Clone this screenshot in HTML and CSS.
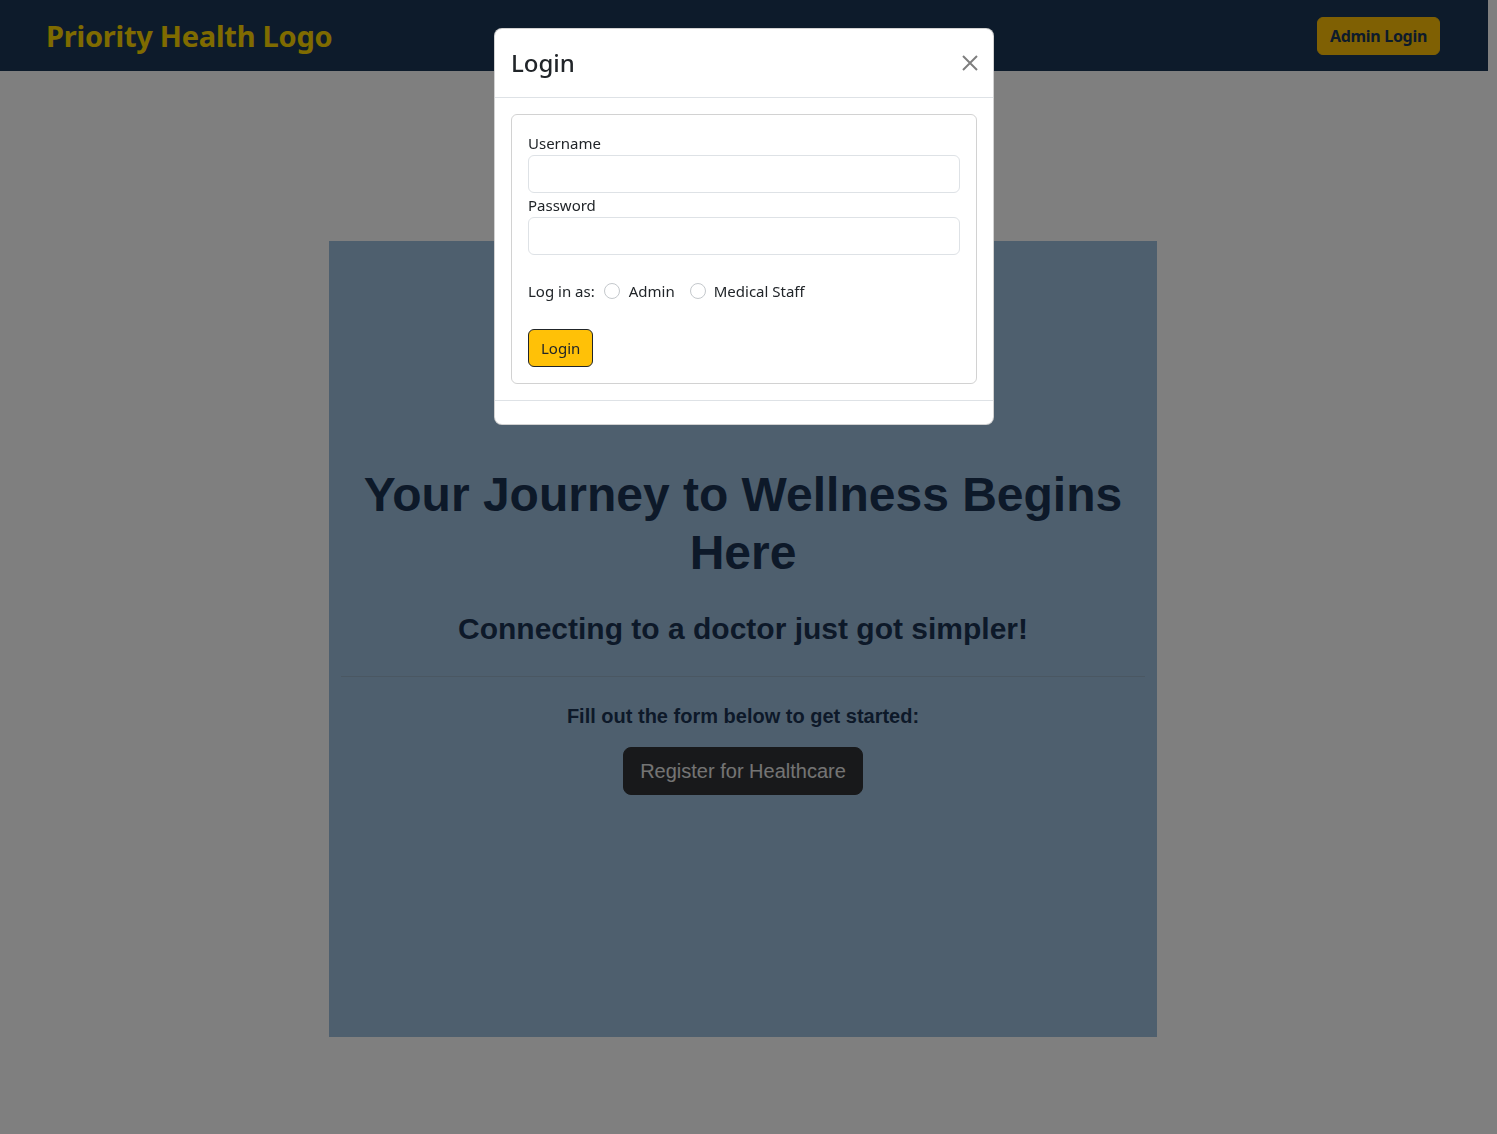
FILE: index.html
```html
<!DOCTYPE html>
<html lang="en">
<head>
<meta charset="utf-8">
<title>Priority Health</title>
<link rel="stylesheet" href="styles.css">
</head>
<body>
<nav class="navbar">
  <div class="logo">Priority Health Logo</div>
  <button class="admin-btn">Admin Login</button>
</nav>
<main class="main">
  <section class="hero">
    <h1 class="hero-title">Your Journey to Wellness Begins Here</h1>
    <h2 class="hero-sub">Connecting to a doctor just got simpler!</h2>
    <hr class="hero-hr">
    <p class="hero-text">Fill out the form below to get started:</p>
    <button class="register-btn">Register for Healthcare</button>
  </section>
</main>

<div class="backdrop"></div>
<div class="modal">
  <div class="modal-dialog">
    <div class="modal-content">
      <div class="modal-header">
        <h4 class="modal-title">Login</h4>
        <button class="btn-close" aria-label="Close">
          <svg width="16" height="16" viewBox="0 0 16 16"><path d="M1 1L15 15M15 1L1 15" stroke="#000" stroke-width="2" fill="none"/></svg>
        </button>
      </div>
      <div class="modal-body">
        <form class="card">
          <label class="form-label">Username</label>
          <input class="form-control" type="text">
          <label class="form-label">Password</label>
          <input class="form-control" type="password">
          <div class="role-row">
            <span>Log in as:</span>
            <span class="radio"></span><span class="radio-label">Admin</span>
            <span class="radio radio-second"></span><span class="radio-label">Medical Staff</span>
          </div>
          <button type="button" class="login-btn">Login</button>
        </form>
      </div>
      <div class="modal-footer"></div>
    </div>
  </div>
</div>
</body>
</html>
```

FILE: styles.css
```css
* { box-sizing: border-box; }
html, body { margin: 0; }
body {
  padding-right: 11px;
  background: #fff;
  font-family: "Noto Sans", "Open Sans", sans-serif;
  color: #212529;
}
.navbar {
  height: 71px;
  margin-right: -2px;
  background: #1b3756;
  display: flex;
  align-items: center;
  justify-content: space-between;
  padding: 0 48px 0 46px;
}
.logo {
  color: #ffd700;
  font-size: 29px;
  font-weight: 700;
  letter-spacing: -0.25px;
}
.admin-btn {
  background: #ffc107;
  color: #1b3756;
  border: 1px solid #ffc107;
  border-radius: 6px;
  height: 38px;
  padding: 0 12px;
  font-family: "Noto Sans", sans-serif;
  font-size: 16px;
  font-weight: 700;
  letter-spacing: -0.3px;
}
.main { padding-top: 170px; }
.hero {
  width: 828px;
  height: 796px;
  margin: 0 auto;
  background: #9dbfdd;
  padding: 225px 12px 0;
  text-align: center;
  color: #1a3353;
  font-family: "Liberation Sans", Arial, sans-serif;
}
.hero-title {
  margin: 0 0 30px;
  font-size: 48px;
  line-height: 1.2;
  font-weight: 700;
}
.hero-sub {
  margin: 0;
  font-size: 30px;
  line-height: 36px;
  font-weight: 700;
}
.hero-hr {
  margin: 29px 0 0;
  border: 0;
  border-top: 1px solid currentColor;
  opacity: 0.25;
}
.hero-text {
  margin: 27px 0 0;
  font-size: 20px;
  line-height: 24px;
  font-weight: 700;
}
.register-btn {
  margin-top: 19px;
  height: 48px;
  padding: 0 16px;
  background: #313336;
  border: 1px solid #313336;
  border-radius: 8px;
  color: #e8e8e8;
  font-family: "Liberation Sans", Arial, sans-serif;
  font-size: 20px;
}
.backdrop {
  position: fixed;
  inset: 0;
  background: rgba(0, 0, 0, 0.5);
  z-index: 10;
}
.modal {
  position: fixed;
  top: 0;
  left: 0;
  right: 9px;
  bottom: 0;
  z-index: 20;
}
.modal-dialog {
  width: 500px;
  margin: 28px auto;
}
.modal-content {
  background: #fff;
  border: 1px solid rgba(0, 0, 0, 0.175);
  border-radius: 8px;
}
.modal-header {
  display: flex;
  align-items: center;
  padding: 16px;
  border-bottom: 1px solid #dee2e6;
}
.modal-title {
  margin: 0;
  font-size: 24px;
  line-height: 36px;
  font-weight: 500;
}
.btn-close {
  margin: -8px -5px -8px auto;
  width: 24px;
  height: 24px;
  padding: 4px;
  border: 0;
  background: transparent;
  opacity: 0.5;
  display: flex;
}
.modal-body { padding: 16px; }
.card {
  margin: 0;
  border: 1px solid rgba(0, 0, 0, 0.175);
  border-radius: 6px;
  padding: 16px;
}
.form-label {
  display: block;
  font-size: 15px;
  line-height: 24px;
}
.form-control {
  display: block;
  width: 100%;
  height: 38px;
  border: 1px solid #dee2e6;
  border-radius: 6px;
  font: inherit;
}
.role-row {
  margin-top: 24px;
  display: flex;
  align-items: center;
  font-size: 15px;
  line-height: 24px;
}
.radio {
  width: 16px;
  height: 16px;
  border: 1px solid #c4c8cc;
  border-radius: 50%;
  margin-left: 9px;
  margin-right: 9px;
}
.radio-second { margin-left: 15px; margin-right: 8px; }
.login-btn {
  display: block;
  margin-top: 26px;
  height: 38px;
  padding: 0 12px;
  background: #ffc107;
  border: 1px solid #212529;
  border-radius: 6px;
  color: #212529;
  font-family: "Noto Sans", sans-serif;
  font-size: 15px;
}
.modal-footer {
  height: 24px;
  border-top: 1px solid #dee2e6;
}
```
